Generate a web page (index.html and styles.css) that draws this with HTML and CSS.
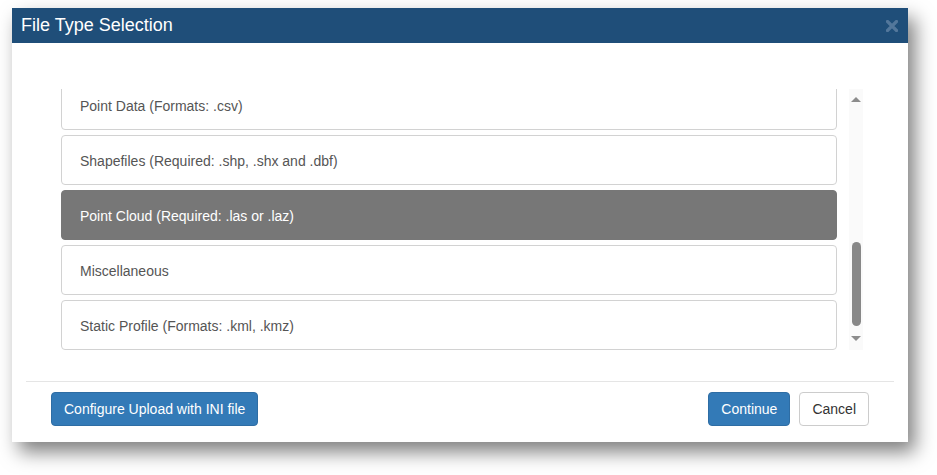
FILE: index.html
```html
<!DOCTYPE html>
<html lang="en">
<head>
    <meta charset="UTF-8">
    <title>File Type Selection</title>
    <link rel="stylesheet" href="styles.css">
</head>
<body>
    <div class="modal">
        <div class="modal-header">
            <h4>File Type Selection</h4>
            <span class="close">
                <svg width="12" height="12" viewBox="0 0 12 12"><path d="M1.5 1.5 L10.5 10.5 M10.5 1.5 L1.5 10.5" stroke="#53779b" stroke-width="3.2" stroke-linecap="round"/></svg>
            </span>
        </div>
        <div class="modal-body">
            <div class="list-view">
                <ul class="type-list">
                    <li>Point Data (Formats: .csv)</li>
                    <li>Shapefiles (Required: .shp, .shx and .dbf)</li>
                    <li class="active">Point Cloud (Required: .las or .laz)</li>
                    <li>Miscellaneous</li>
                    <li>Static Profile (Formats: .kml, .kmz)</li>
                </ul>
            </div>
            <div class="scrollbar">
                <span class="arrow up"></span>
                <div class="track"><div class="thumb"></div></div>
                <span class="arrow down"></span>
            </div>
        </div>
        <div class="modal-footer">
            <button class="btn btn-primary">Configure Upload with INI file</button>
            <div class="right">
                <button class="btn btn-primary">Continue</button>
                <button class="btn btn-default">Cancel</button>
            </div>
        </div>
    </div>
</body>
</html>
```

FILE: styles.css
```css
* {
    margin: 0;
    padding: 0;
    box-sizing: border-box;
}
html, body {
    height: 100%;
}
body {
    min-height: 475px;
    padding-top: 8px;
    background-color: #fff;
    font-family: "Liberation Sans", Arial, sans-serif;
    font-size: 14px;
    color: #555;
}
ul, li {
    list-style: none;
}
.modal {
    width: 896px;
    margin-left: 12px;
    background-color: #fff;
    box-shadow: 7px 10px 18px rgba(0, 0, 0, 0.5);
}
.modal-header {
    height: 35px;
    background-color: #1f4e79;
    display: flex;
    align-items: center;
    justify-content: space-between;
    padding: 0 10px 0 9px;
}
.modal-header h4 {
    font-size: 18px;
    font-weight: normal;
    color: #fff;
    margin-top: -1px;
}
.close {
    display: flex;
    margin-top: 1px;
}
.modal-body {
    display: flex;
    padding: 46px 45px 31px 49px;
    gap: 12px;
}
.list-view {
    flex: 1;
    height: 261px;
    overflow: hidden;
}
.type-list {
    margin-top: -9px;
}
.type-list li {
    height: 50px;
    margin-bottom: 5px;
    padding: 2px 0 0 18px;
    display: flex;
    align-items: center;
    border: 1px solid #d2d2d2;
    border-radius: 4px;
    color: #555;
    cursor: pointer;
}
.type-list li.active {
    background-color: #777;
    border-color: #777;
    color: #fff;
}
.scrollbar {
    width: 14px;
    height: 261px;
    background-color: #fafafa;
    display: flex;
    flex-direction: column;
    align-items: center;
}
.arrow {
    width: 0;
    height: 0;
    border-left: 5px solid transparent;
    border-right: 5px solid transparent;
}
.arrow.up {
    margin-top: 8px;
    border-bottom: 5px solid #8c8c8c;
}
.arrow.down {
    margin-bottom: 9px;
    border-top: 5px solid #8c8c8c;
}
.track {
    flex: 1;
    width: 9px;
    display: flex;
    flex-direction: column;
    justify-content: flex-end;
    padding-bottom: 10px;
}
.thumb {
    height: 84px;
    border-radius: 5px;
    background-color: #888;
}
.modal-footer {
    margin: 0 14px;
    border-top: 1px solid #e5e5e5;
    padding: 10px 25px 16px;
    display: flex;
    justify-content: space-between;
}
.right {
    display: flex;
    gap: 9px;
}
.btn {
    height: 34px;
    padding: 0 12px;
    font-family: "Liberation Sans", Arial, sans-serif;
    font-size: 14px;
    border: 1px solid transparent;
    border-radius: 4px;
    cursor: pointer;
}
.btn-primary {
    background-color: #337ab7;
    border-color: #2e6da4;
    color: #fff;
}
.btn-default {
    background-color: #fff;
    border-color: #ccc;
    color: #333;
}
```
